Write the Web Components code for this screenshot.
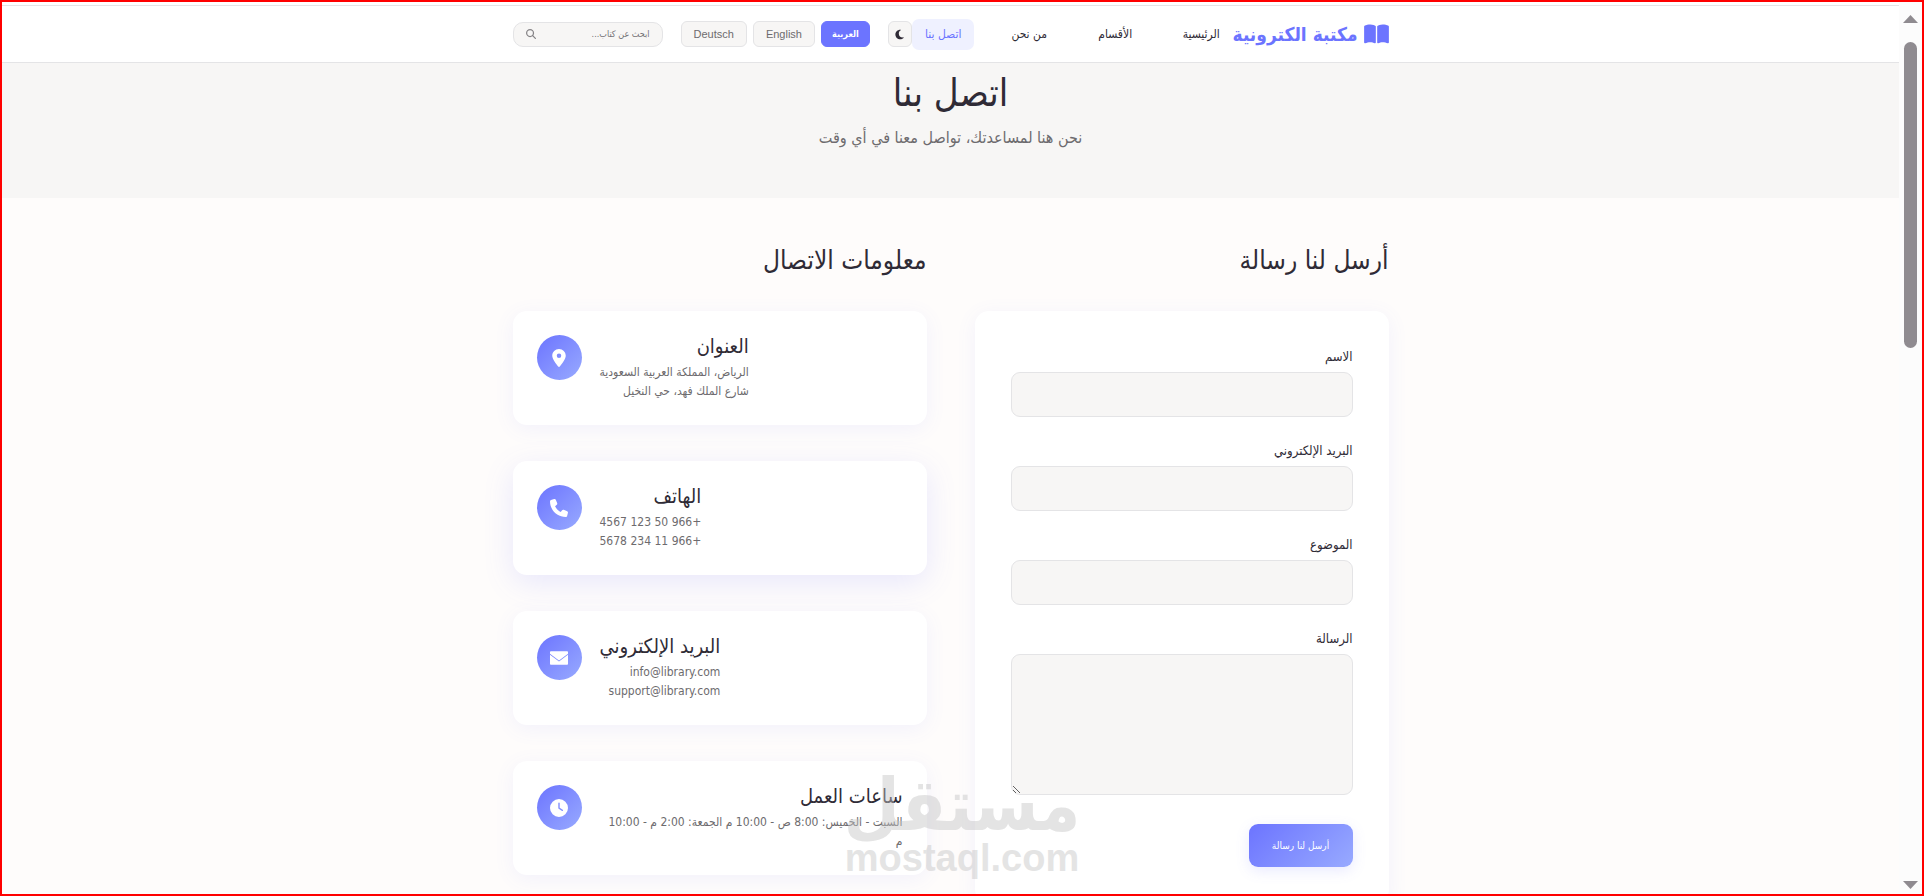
<!DOCTYPE html>
<html lang="ar" dir="rtl">
<head>
<meta charset="utf-8">
<meta name="viewport" content="width=device-width, initial-scale=1">
<title>اتصل بنا</title>
<style>
  :root {
    --primary: #6c74ff;
    --primary-light: #98aaff;
    --ink: #2f2b36;
    --muted: #6d6b6e;
    --line: #e4e4e6;
    --soft: #f7f6f5;
    --page: #fefcfb;
  }

  body {
    margin: 0;
    color: var(--ink);
    background: var(--page);
    font-family: "DejaVu Sans Condensed", "DejaVu Sans", sans-serif;
    font-size: 12px;
    line-height: 20px;
  }
</style>
</head>
<body>
<page-frame>
  <site-header></site-header>
  <page-hero>
    <span slot="title">اتصل بنا</span>
    نحن هنا لمساعدتك، تواصل معنا في أي وقت
  </page-hero>
  <contact-section>
    <contact-form slot="form"></contact-form>
    <info-card slot="info" icon="pin" heading="العنوان">الرياض، المملكة العربية السعودية<br>شارع الملك فهد، حي النخيل</info-card>
    <info-card slot="info" icon="phone" heading="الهاتف" raised>+966 50 123 4567<br>+966 11 234 5678</info-card>
    <info-card slot="info" icon="mail" heading="البريد الإلكتروني">info@library.com<br>support@library.com</info-card>
    <info-card slot="info" icon="clock" heading="ساعات العمل">السبت - الخميس: 8:00 ص - 10:00 م الجمعة: 2:00 م - 10:00 م</info-card>
  </contact-section>
</page-frame>

<script>
const icons = {
  book: {
    box: "0 0 576 512",
    d: "M249.6 471.5c10.8 3.8 22.4-4.1 22.4-15.5V78.6c0-4.2-1.6-8.4-5-11C247.4 52 202.4 32 144 32C93.5 32 46.3 45.3 18.1 56.1C6.8 60.5 0 71.7 0 83.8V454.1c0 11.9 12.8 20.2 24.1 16.5C55.6 460.1 105.5 448 144 448c33.9 0 79 14 105.6 23.5zm76.8 0C353 462 398.1 448 432 448c38.5 0 88.4 12.1 119.9 22.6c11.3 3.8 24.1-4.6 24.1-16.5V83.8c0-12.1-6.8-23.3-18.1-27.6C529.7 45.3 482.5 32 432 32c-58.4 0-103 20-123 35.6c-3.3 2.6-5 6.8-5 11V456c0 11.4 11.7 19.3 22.4 15.5z",
  },
  moon: {
    box: "0 0 384 512",
    d: "M223.5 32C100 32 0 132.3 0 256S100 480 223.5 480c60.6 0 115.5-24.2 155.8-63.4c5-4.9 6.3-12.5 3.1-18.7s-10.1-9.7-17-8.5c-9.8 1.7-19.8 2.6-30.1 2.6c-96.9 0-175.5-78.8-175.5-176c0-65.8 36-123.1 89.3-153.3c6.1-3.5 9.2-10.5 7.7-17.3s-7.3-11.9-14.3-12.5c-6.3-.5-12.6-.8-19-.8z",
  },
  search: {
    box: "0 0 512 512",
    d: "M416 208c0 45.9-14.9 88.3-40 122.7L502.6 457.4c12.5 12.5 12.5 32.8 0 45.3s-32.8 12.5-45.3 0L330.7 376c-34.4 25.2-76.8 40-122.7 40C93.1 416 0 322.9 0 208S93.1 0 208 0S416 93.1 416 208zM208 352a144 144 0 1 0 0-288 144 144 0 1 0 0 288z",
  },
  pin: {
    box: "0 0 384 512",
    d: "M215.7 499.2C267 435 384 279.4 384 192C384 86 298 0 192 0S0 86 0 192c0 87.4 117 243 168.3 307.2c12.3 15.3 35.1 15.3 47.4 0zM192 128a64 64 0 1 1 0 128 64 64 0 1 1 0-128z",
  },
  phone: {
    box: "0 0 512 512",
    d: "M164.9 24.6c-7.7-18.6-28-28.5-47.4-23.2l-88 24C12.1 30.2 0 46 0 64C0 311.4 200.6 512 448 512c18 0 33.8-12.1 38.6-29.5l24-88c5.3-19.4-4.6-39.7-23.2-47.4l-96-40c-16.3-6.8-35.2-2.1-46.3 11.6L304.7 368C234.3 334.7 177.3 277.7 144 207.3L193.3 167c13.7-11.2 18.4-30 11.6-46.3l-40-96z",
  },
  mail: {
    box: "0 0 512 512",
    d: "M24 64C10 64 0 74 0 88v48L256 326L512 136V88c0-14-10-24-24-24H24zM0 164V424c0 14 10 24 24 24H488c14 0 24-10 24-24V164L256 354L0 164z",
  },
  clock: {
    box: "0 0 512 512",
    d: "M256 0a256 256 0 1 1 0 512A256 256 0 1 1 256 0zM236 120V256c0 8 4 15.5 10.7 20l96 64c9 6 21 4 27-6s4-21-6-27L276 246V120c0-11-9-20-20-20s-20 9-20 20z",
  },
};

function attach(el, markup) {
  const tempt = document.createElement("template");
  tempt.innerHTML = markup;
  el.attachShadow({ mode: "open" });
  el.shadowRoot.appendChild(tempt.content.cloneNode(true));
}

class AppIcon extends HTMLElement {
  connectedCallback() {
    if (this.shadowRoot) return;
    const icon = icons[this.getAttribute("name")];
    attach(
      this,
      `
      <style>
        :host { display: block; flex: none; }
        svg { display: block; width: 100%; height: 100%; fill: currentColor; }
      </style>
      <svg viewBox="${icon.box}" aria-hidden="true"><path fill-rule="evenodd" d="${icon.d}"/></svg>
    `
    );
  }
}

class PageFrame extends HTMLElement {
  constructor() {
    super();
    attach(
      this,
      `
      <style>
        :host {
          box-sizing: border-box;
          display: flex;
          direction: ltr;
          position: relative;
          height: 100vh;
          border: 2px solid #ff0000;
          overflow: hidden;
        }
        main { flex: 1; min-width: 0; direction: rtl; }
      </style>
      <main><slot></slot></main>
      <scroll-rail></scroll-rail>
      <water-mark></water-mark>
    `
    );
  }
}

class ScrollRail extends HTMLElement {
  constructor() {
    super();
    attach(
      this,
      `
      <style>
        :host {
          box-sizing: border-box;
          display: flex;
          flex-direction: column;
          align-items: center;
          width: 23px;
          padding: 13px 0 5px;
          background: #fcfcfc;
          color: #8f8b90;
        }
        svg { display: block; flex: none; width: 15px; height: 8px; fill: currentColor; }
        .track { flex: 1; padding-top: 19px; }
        .thumb {
          width: 13px;
          height: 306px;
          border-radius: 7px;
          background: currentColor;
        }
      </style>
      <svg viewBox="0 0 15 8"><path d="M7.5 0L15 8H0z"/></svg>
      <div class="track"><div class="thumb"></div></div>
      <svg viewBox="0 0 15 8"><path d="M0 0H15L7.5 8z"/></svg>
    `
    );
  }
}

class WaterMark extends HTMLElement {
  constructor() {
    super();
    attach(
      this,
      `
      <style>
        :host {
          display: block;
          position: absolute;
          left: 50%;
          bottom: 14px;
          transform: translateX(-50%);
          text-align: center;
          white-space: nowrap;
          color: #c4c4c4;
          opacity: 0.45;
          pointer-events: none;
          font-weight: bold;
        }
        div { height: 62px; font-size: 72px; line-height: 62px; }
        p { margin: 0; font: bold 38px/44px "Liberation Sans", sans-serif; direction: ltr; }
      </style>
      <div>مستقل</div>
      <p>mostaql.com</p>
    `
    );
  }
}

class SiteHeader extends HTMLElement {
  constructor() {
    super();
    attach(
      this,
      `
      <style>
        :host {
          display: block;
          padding-top: 3px;
          background: #fff;
        }
        .bar {
          border-top: 1px solid var(--line);
          border-bottom: 1px solid var(--line);
        }
        .inner, .side, nav, .langs, .logo, .search {
          display: flex;
          align-items: center;
        }
        .inner {
          justify-content: space-between;
          max-width: 876px;
          height: 56px;
          margin: 0 auto;
        }
        .logo {
          gap: 6px;
          color: var(--primary);
          font-size: 19px;
          font-weight: bold;
          line-height: 28px;
          text-decoration: none;
          white-space: nowrap;
        }
        .logo app-icon { width: 25px; height: 22px; }
        nav { gap: 24px; }
        nav a {
          min-width: 38px;
          padding: 5px 12px;
          border-radius: 7px;
          color: var(--ink);
          line-height: 21px;
          text-align: center;
          text-decoration: none;
          white-space: nowrap;
        }
        nav a.active { background: #eff1ff; color: var(--primary); }
        .side { gap: 18px; }
        .langs { gap: 6px; }
        button {
          box-sizing: border-box;
          height: 26px;
          padding: 0 12px;
          border: 1px solid var(--line);
          border-radius: 6px;
          background: var(--soft);
          color: var(--muted);
          font: 11px "Liberation Sans", "DejaVu Sans Condensed", sans-serif;
        }
        button.active {
          width: 49px;
          padding: 0;
          border-color: var(--primary);
          background: var(--primary);
          color: #fff;
          font-family: "DejaVu Sans Condensed", sans-serif;
          font-size: 9px;
          font-weight: bold;
        }
        .theme { display: grid; place-items: center; width: 24px; padding: 0; color: var(--ink); }
        .theme app-icon { width: 9px; height: 11px; }
        .search {
          box-sizing: border-box;
          width: 150px;
          height: 25px;
          padding: 0 12px;
          border: 1px solid var(--line);
          border-radius: 10px;
          background: var(--soft);
          color: #858386;
        }
        .search app-icon { width: 10px; height: 10px; }
        input {
          flex: 1;
          min-width: 0;
          padding: 0;
          border: 0;
          outline: 0;
          background: none;
          font-family: inherit;
          font-size: 9px;
        }
        input::placeholder { color: #747276; }
      </style>
      <div class="bar">
        <div class="inner">
          <div class="side">
            <a class="logo" href="#"><app-icon name="book"></app-icon>مكتبة الكترونية</a>
          </div>
          <nav>
            <a href="#">الرئيسية</a>
            <a href="#">الأقسام</a>
            <a href="#">من نحن</a>
            <a class="active" href="#">اتصل بنا</a>
          </nav>
          <div class="side">
            <button class="theme" type="button" aria-label="الوضع الليلي"><app-icon name="moon"></app-icon></button>
            <div class="langs">
              <button class="active" type="button">العربية</button>
              <button type="button">English</button>
              <button type="button">Deutsch</button>
            </div>
            <label class="search">
              <input type="text" placeholder="ابحث عن كتاب..." aria-label="بحث">
              <app-icon name="search"></app-icon>
            </label>
          </div>
        </div>
      </div>
    `
    );
  }
}

class PageHero extends HTMLElement {
  constructor() {
    super();
    attach(
      this,
      `
      <style>
        :host {
          display: block;
          padding: 8px 0 48px;
          background: var(--soft);
          text-align: center;
        }
        h1 { margin: 0 0 11px; font-size: 38px; font-weight: normal; line-height: 44px; }
        p { margin: 0; color: var(--muted); font-size: 16px; line-height: 24px; }
      </style>
      <h1><slot name="title"></slot></h1>
      <p><slot></slot></p>
    `
    );
  }
}

class ContactSection extends HTMLElement {
  constructor() {
    super();
    attach(
      this,
      `
      <style>
        :host {
          display: grid;
          grid-template-columns: 1fr 1fr;
          gap: 48px;
          max-width: 876px;
          margin: 0 auto;
          padding: 42px 0;
        }
        h2 { margin: 0 0 31px; font-size: 26px; font-weight: normal; line-height: 40px; }
        .cards { display: grid; gap: 36px; }
      </style>
      <section>
        <h2>أرسل لنا رسالة</h2>
        <slot name="form"></slot>
      </section>
      <section>
        <h2>معلومات الاتصال</h2>
        <div class="cards"><slot name="info"></slot></div>
      </section>
    `
    );
  }
}

class FormField extends HTMLElement {
  connectedCallback() {
    if (this.shadowRoot) return;
    const control = this.hasAttribute("multiline")
      ? `<textarea id="control"></textarea>`
      : `<input id="control" type="${this.getAttribute("type") || "text"}">`;
    attach(
      this,
      `
      <style>
        :host { display: block; margin-bottom: 24px; }
        label { display: block; margin-bottom: 5px; font-size: 13px; line-height: 20px; }
        input, textarea {
          box-sizing: border-box;
          display: block;
          width: 100%;
          height: 45px;
          padding: 12px;
          border: 1px solid var(--line);
          border-radius: 9px;
          background: var(--soft);
          color: inherit;
          font: inherit;
        }
        textarea { height: 141px; resize: vertical; }
      </style>
      <label for="control">${this.getAttribute("label")}</label>
      ${control}
    `
    );
  }
}

class ContactForm extends HTMLElement {
  constructor() {
    super();
    attach(
      this,
      `
      <style>
        :host {
          display: block;
          padding: 36px;
          border-radius: 14px;
          background: #fff;
          box-shadow: 0 4px 20px rgba(108, 116, 255, 0.08);
        }
        button {
          height: 43px;
          min-width: 104px;
          margin-top: 5px;
          padding: 0 22px;
          border: 0;
          border-radius: 9px;
          background: linear-gradient(135deg, var(--primary), var(--primary-light));
          box-shadow: 0 4px 14px rgba(108, 116, 255, 0.15);
          color: #fff;
          font-family: inherit;
          font-size: 10px;
        }
      </style>
      <form>
        <form-field label="الاسم"></form-field>
        <form-field label="البريد الإلكتروني" type="email"></form-field>
        <form-field label="الموضوع"></form-field>
        <form-field label="الرسالة" multiline></form-field>
        <button type="button">أرسل لنا رسالة</button>
      </form>
    `
    );
  }
}

class InfoCard extends HTMLElement {
  connectedCallback() {
    if (this.shadowRoot) return;
    attach(
      this,
      `
      <style>
        :host {
          box-sizing: border-box;
          display: flex;
          flex-direction: row-reverse;
          justify-content: flex-start;
          align-items: flex-start;
          gap: 18px;
          min-height: 114px;
          padding: 24px;
          border-radius: 14px;
          background: #fff;
          box-shadow: 0 4px 20px rgba(108, 116, 255, 0.08);
        }
        :host([raised]) { box-shadow: 0 8px 30px rgba(108, 116, 255, 0.15); }
        .badge {
          display: grid;
          flex: none;
          place-items: center;
          width: 45px;
          height: 45px;
          border-radius: 50%;
          background: linear-gradient(135deg, var(--primary), var(--primary-light));
          color: #fff;
        }
        .badge app-icon { width: 18px; height: 18px; }
        h3 { margin: 0 0 6px; font-size: 20px; font-weight: normal; line-height: 22px; }
        p { margin: 0; color: var(--muted); font-size: 12px; line-height: 19px; }
      </style>
      <div class="badge"><app-icon name="${this.getAttribute("icon")}"></app-icon></div>
      <div>
        <h3>${this.getAttribute("heading")}</h3>
        <p><slot></slot></p>
      </div>
    `
    );
  }
}

customElements.define("app-icon", AppIcon);
customElements.define("scroll-rail", ScrollRail);
customElements.define("water-mark", WaterMark);
customElements.define("site-header", SiteHeader);
customElements.define("page-hero", PageHero);
customElements.define("form-field", FormField);
customElements.define("contact-form", ContactForm);
customElements.define("info-card", InfoCard);
customElements.define("contact-section", ContactSection);
customElements.define("page-frame", PageFrame);
</script>
</body>
</html>
